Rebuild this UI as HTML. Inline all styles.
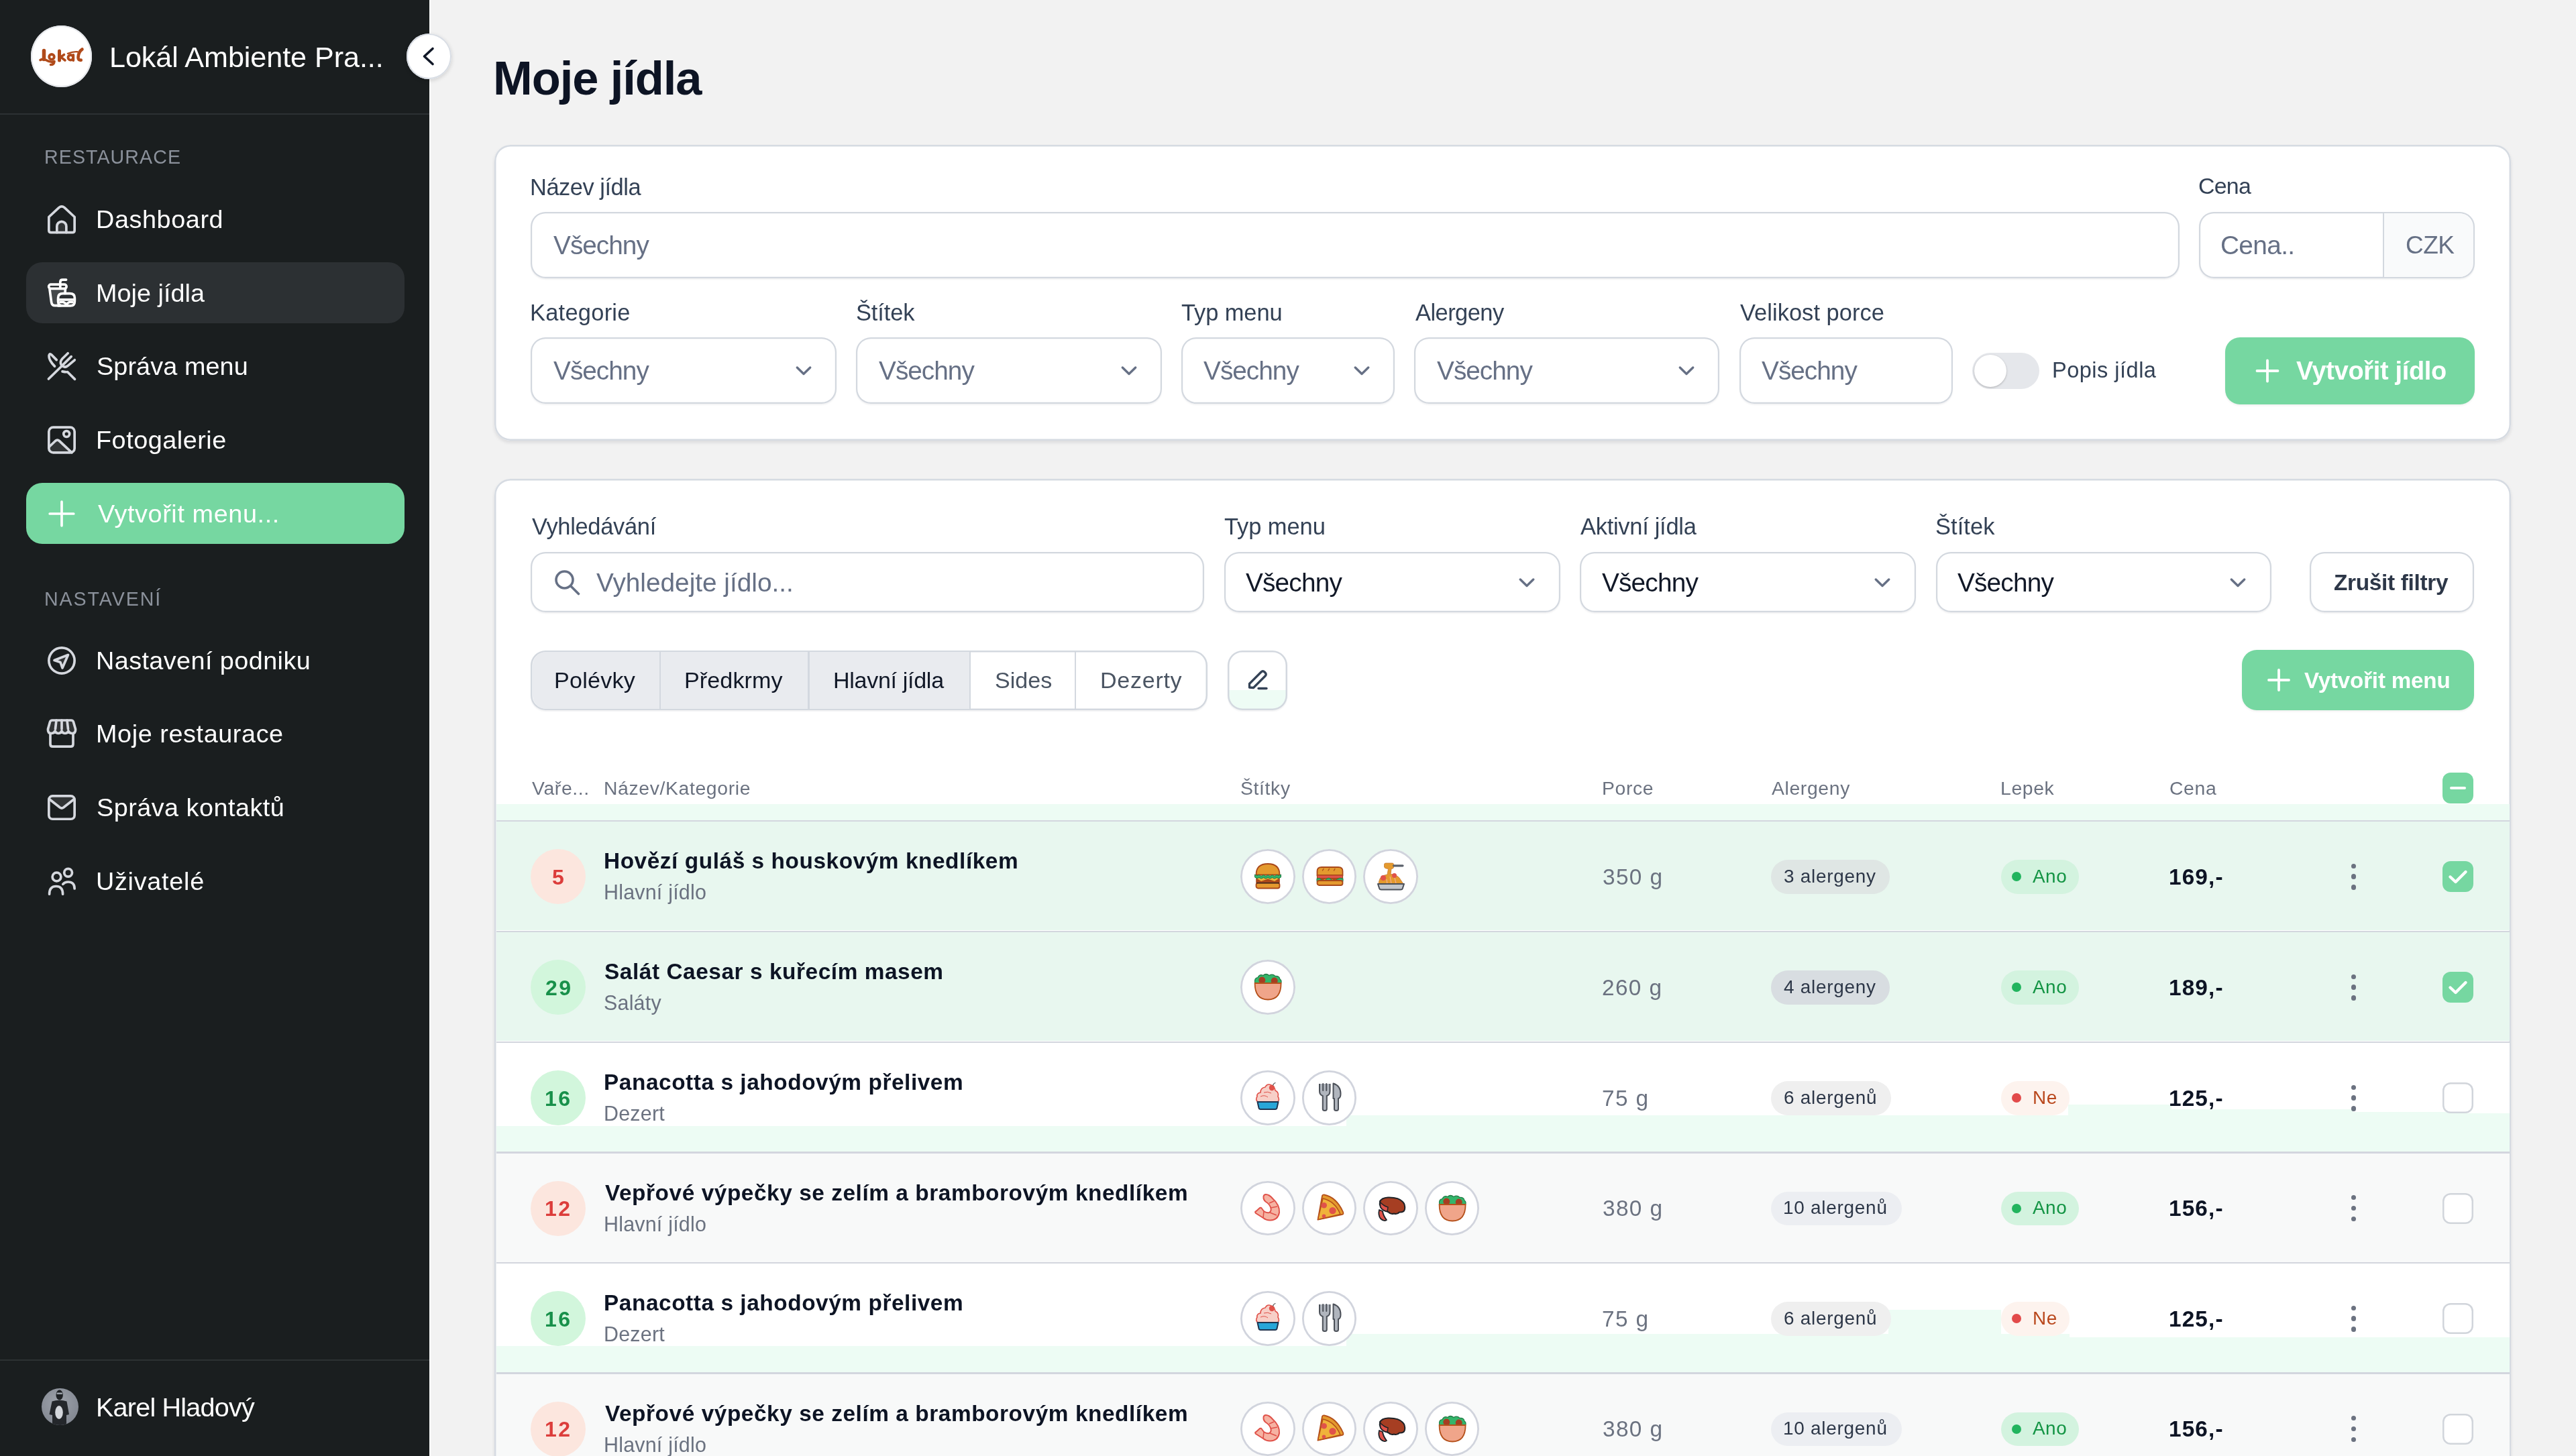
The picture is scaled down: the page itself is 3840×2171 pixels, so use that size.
<!DOCTYPE html><html><head><meta charset="utf-8"><style>
html,body{margin:0;padding:0;width:3840px;height:2171px;overflow:hidden;background:#f2f2f2;}
body{position:relative;font-family:"Liberation Sans",sans-serif;}
.t{position:absolute;white-space:nowrap;line-height:1;font-family:"Liberation Sans",sans-serif;will-change:transform;}
@media (max-width:2600px){html{zoom:0.5}}
@media (max-width:1400px){html{zoom:0.33333}}
</style></head><body>
<div style="position:absolute;left:0.00px;top:0.00px;width:3840.00px;height:2171.00px;background:#f2f2f2;"></div>
<div style="position:absolute;left:0.00px;top:0.00px;width:640.00px;height:2171.00px;background:#1a1e1f;"></div>
<div style="position:absolute;left:640.00px;top:0.00px;width:1.50px;height:2171.00px;background:#fbfbfb;"></div>
<div style="position:absolute;left:0.00px;top:169.00px;width:640.00px;height:2.00px;background:#2c3133;"></div>
<div style="position:absolute;left:0.00px;top:2027.00px;width:640.00px;height:2.00px;background:#2c3133;"></div>
<div style="position:absolute;left:46.00px;top:38.00px;width:91.00px;height:92.00px;background:#fff;border-radius:50%;box-shadow:0 0 0 2px #e5e7eb inset;"></div>
<svg style="position:absolute;left:59.00px;top:71.00px;overflow:visible;" width="66" height="28" viewBox="0 0 66 28"><g fill="none" stroke="#b04a1a" stroke-linecap="round" stroke-linejoin="round"><path d="M6.5,4.5 V17.5" stroke-width="5.5"/><path d="M1,18.5 Q5.5,16 10,18.8 Q16,22.5 22,20.5 Q21.5,25.5 16.5,25.5" stroke-width="3.6"/><circle cx="18" cy="13.8" r="3.8" stroke-width="3.8"/><path d="M29.5,5 V19" stroke-width="5"/><path d="M36.5,10.5 L31.5,14 L38,19" stroke-width="3.6"/><circle cx="46.3" cy="14.8" r="3.8" stroke-width="3.8"/><path d="M50.3,11 V19" stroke-width="3.8"/><path d="M42,8.8 Q50,5.5 56.5,6.2" stroke-width="2.4"/><path d="M63.5,2.5 Q58,6 57.5,14.5 Q57.3,19 61.8,18.6" stroke-width="4.6"/></g></svg>
<div class="t" style="left:163.00px;top:64.45px;font-size:43.17px;letter-spacing:-0.075px;color:#ffffff;">Lokál Ambiente Pra...</div>
<div style="position:absolute;left:605.75px;top:50.00px;width:67.50px;height:68.00px;background:#fff;border-radius:50%;box-shadow:0 0 0 2px #d8dde4 inset,0 2px 6px rgba(0,0,0,0.15);"></div>
<svg style="position:absolute;left:620.00px;top:64.00px;" width="40" height="40" viewBox="0 0 40 40"><path d="M25,8.5 L12.5,20 L25,31.5" fill="none" stroke="#111827" stroke-width="3.6" stroke-linecap="round" stroke-linejoin="round"/></svg>
<div class="t" style="left:65.50px;top:220.26px;font-size:28.63px;letter-spacing:1.056px;color:#8b919b;">RESTAURACE</div>
<div class="t" style="left:65.50px;top:878.76px;font-size:28.63px;letter-spacing:1.906px;color:#8b919b;">NASTAVENÍ</div>
<div style="position:absolute;left:39.00px;top:391.00px;width:564.00px;height:90.50px;background:#2c3033;border-radius:24px;"></div>
<div style="position:absolute;left:39.00px;top:720.00px;width:564.00px;height:90.75px;background:#76d7a1;border-radius:24px;"></div>
<div class="t" style="left:142.75px;top:308.50px;font-size:37.79px;letter-spacing:0.594px;color:#ffffff;">Dashboard</div>
<div class="t" style="left:142.75px;top:418.75px;font-size:37.79px;letter-spacing:0.028px;color:#ffffff;">Moje jídla</div>
<div class="t" style="left:143.75px;top:527.75px;font-size:37.79px;letter-spacing:0.100px;color:#ffffff;">Správa menu</div>
<div class="t" style="left:142.75px;top:637.50px;font-size:37.79px;letter-spacing:0.525px;color:#ffffff;">Fotogalerie</div>
<div class="t" style="left:145.75px;top:747.50px;font-size:37.79px;letter-spacing:0.617px;color:#ffffff;">Vytvořit menu...</div>
<div class="t" style="left:142.75px;top:966.75px;font-size:37.79px;letter-spacing:0.422px;color:#ffffff;">Nastavení podniku</div>
<div class="t" style="left:142.75px;top:1076.25px;font-size:37.79px;letter-spacing:0.589px;color:#ffffff;">Moje restaurace</div>
<div class="t" style="left:143.75px;top:1186.00px;font-size:37.79px;letter-spacing:0.482px;color:#ffffff;">Správa kontaktů</div>
<div class="t" style="left:142.75px;top:1295.50px;font-size:37.79px;letter-spacing:0.719px;color:#ffffff;">Uživatelé</div>
<div class="t" style="left:142.75px;top:2078.53px;font-size:39.53px;letter-spacing:-0.771px;color:#ffffff;">Karel Hladový</div>
<svg style="position:absolute;left:67.50px;top:302.50px;" width="48" height="48" viewBox="0 0 48 48"><path d="M17,43.6 V34.35 A7,7 0 0 1 31,34.35 V43.6 Z" fill="rgba(255,255,255,0.10)"/><path d="M4.85,20.5 L19.8,6.6 Q24,3 28.2,6.6 L43.15,20.5 V40.5 Q43.15,43.6 40,43.6 H8 Q4.85,43.6 4.85,40.5 Z" fill="none" stroke="#d5d8de" stroke-width="3.7" stroke-linecap="round" stroke-linejoin="round"/><path d="M16.85,43.6 V34.35 A7,7 0 0 1 30.85,34.35 V43.6" fill="none" stroke="#d5d8de" stroke-width="3.7" stroke-linecap="round" stroke-linejoin="round"/></svg>
<svg style="position:absolute;left:67.50px;top:412.00px;" width="48" height="48" viewBox="0 0 48 48"><path d="M6,19.3 L8.6,38.5 Q9.3,43.7 14,43.7 H20 L19,33 Q19,27 26,26 L29.3,19.3 Z" fill="rgba(255,255,255,0.12)"/><path d="M21.8,18 V8.5 Q21.8,5.05 25.2,5.05 H30.6" fill="none" stroke="#ffffff" stroke-width="3.7" stroke-linecap="round" stroke-linejoin="round"/><rect x="4.65" y="12.05" width="26.45" height="6.4" rx="3.2" fill="none" stroke="#ffffff" stroke-width="3.7" stroke-linecap="round" stroke-linejoin="round"/><path d="M6,19.3 L8.6,38.5 Q9.3,43.7 14,43.7 H22" fill="none" stroke="#ffffff" stroke-width="3.7" stroke-linecap="round" stroke-linejoin="round"/><path d="M29.4,19 L29,25.5" fill="none" stroke="#ffffff" stroke-width="3.7" stroke-linecap="round" stroke-linejoin="round"/><path d="M18.65,43.85 H37 Q43.35,43.85 43.35,37.5 V32 Q43.35,25.65 36,25.65 H26 Q18.65,25.65 18.65,32 V37.5 Q18.65,43.85 25,43.85" fill="none" stroke="#ffffff" stroke-width="3.7" stroke-linecap="round" stroke-linejoin="round"/><path d="M18.65,34.85 H43.35" fill="none" stroke="#ffffff" stroke-width="3.7" stroke-linecap="round" stroke-linejoin="round"/><path d="M22,38.5 H26.5 L31,41.3 L35.5,38.5 H40" fill="none" stroke="#ffffff" stroke-width="3.7" stroke-linecap="round" stroke-linejoin="round"/></svg>
<svg style="position:absolute;left:67.50px;top:522.00px;" width="48" height="48" viewBox="0 0 48 48"><path d="M16.3,14.6 L8.6,6.9 Q5.6,4 5,8.5 Q4.6,15 13.5,24.1" fill="none" stroke="#d5d8de" stroke-width="3.7" stroke-linecap="round" stroke-linejoin="round"/><path d="M25,31.9 Q29,33 32.8,32.7 L43.5,43.4" fill="none" stroke="#d5d8de" stroke-width="3.7" stroke-linecap="round" stroke-linejoin="round"/><path d="M4.4,43 L23.6,24.2" fill="none" stroke="#d5d8de" stroke-width="3.7" stroke-linecap="round" stroke-linejoin="round"/><path d="M33.2,4.7 L25,12.7 Q20.5,17.5 23.5,22.5 Q28.5,27.5 33.5,23.2 L43.3,14.8" fill="none" stroke="#d5d8de" stroke-width="3.7" stroke-linecap="round" stroke-linejoin="round"/><path d="M38.2,9.65 L25.4,22.4" fill="none" stroke="#d5d8de" stroke-width="3.7" stroke-linecap="round" stroke-linejoin="round"/></svg>
<svg style="position:absolute;left:67.50px;top:631.60px;" width="48" height="48" viewBox="0 0 48 48"><path d="M5,34.5 L14.5,25.5 Q17.5,22.8 20.5,25.5 L39,42.9 H9 Q5,42.9 5,39 Z" fill="rgba(255,255,255,0.10)"/><rect x="4.85" y="5.1" width="38.3" height="37.8" rx="6.5" fill="none" stroke="#d5d8de" stroke-width="3.7" stroke-linecap="round" stroke-linejoin="round"/><circle cx="31.2" cy="15" r="4.4" fill="none" stroke="#d5d8de" stroke-width="3.7" stroke-linecap="round" stroke-linejoin="round"/><path d="M5,34.5 L14.5,25.5 Q17.5,22.8 20.5,25.5 L39,42.9" fill="none" stroke="#d5d8de" stroke-width="3.7" stroke-linecap="round" stroke-linejoin="round"/></svg>
<svg style="position:absolute;left:67.50px;top:741.50px;" width="48" height="48" viewBox="0 0 48 48"><path d="M24,6.2 V41.8 M6.2,24 H41.8" fill="none" stroke="#ffffff" stroke-width="3.7" stroke-linecap="round" stroke-linejoin="round"/></svg>
<svg style="position:absolute;left:67.50px;top:960.60px;" width="48" height="48" viewBox="0 0 48 48"><path d="M33.5,15.5 L13,23.5 L22,26.5 L25,35 Z" fill="rgba(255,255,255,0.10)"/><circle cx="24" cy="24" r="19.15" fill="none" stroke="#d5d8de" stroke-width="3.7" stroke-linecap="round" stroke-linejoin="round"/><path d="M33.5,15.5 L13,23.5 L22,26.5 L25,35 Z" fill="none" stroke="#d5d8de" stroke-width="3.7" stroke-linecap="round" stroke-linejoin="round"/></svg>
<svg style="position:absolute;left:67.50px;top:1070.00px;" width="48" height="48" viewBox="0 0 48 48"><path d="M3.5,17 L6.5,6.5 Q7.2,4 10,4 H38 Q40.8,4 41.5,6.5 L44.5,17 V18.5 Q44.5,23.5 39.5,23.5 Q35.5,23.5 34,20 Q32.3,23.5 29,23.5 Q25.6,23.5 24,20 Q22.4,23.5 19,23.5 Q15.7,23.5 14,20 Q12.5,23.5 8.5,23.5 Q3.5,23.5 3.5,18.5 Z" fill="rgba(255,255,255,0.10)"/><path d="M3.5,17 L6.5,6.5 Q7.2,4 10,4 H38 Q40.8,4 41.5,6.5 L44.5,17 V18.5 Q44.5,23.5 39.5,23.5 Q35.5,23.5 34,20 Q32.3,23.5 29,23.5 Q25.6,23.5 24,20 Q22.4,23.5 19,23.5 Q15.7,23.5 14,20 Q12.5,23.5 8.5,23.5 Q3.5,23.5 3.5,18.5 Z" fill="none" stroke="#d5d8de" stroke-width="3.7" stroke-linecap="round" stroke-linejoin="round"/><path d="M16,4 L14.5,17 M24,4 V17 M32,4 L33.5,17" fill="none" stroke="#d5d8de" stroke-width="3.7" stroke-linecap="round" stroke-linejoin="round"/><path d="M7,24 V39.5 Q7,43.15 10.5,43.15 H37.5 Q41,43.15 41,39.5 V24" fill="none" stroke="#d5d8de" stroke-width="3.7" stroke-linecap="round" stroke-linejoin="round"/></svg>
<svg style="position:absolute;left:67.50px;top:1180.00px;" width="48" height="48" viewBox="0 0 48 48"><path d="M6,9 L24,24 L42,9 Z" fill="rgba(255,255,255,0.10)"/><rect x="4.85" y="6.85" width="38.3" height="34.4" rx="5.5" fill="none" stroke="#d5d8de" stroke-width="3.7" stroke-linecap="round" stroke-linejoin="round"/><path d="M5.5,11.5 L21.3,24 Q24,26 26.7,24 L42.5,11.5" fill="none" stroke="#d5d8de" stroke-width="3.7" stroke-linecap="round" stroke-linejoin="round"/></svg>
<svg style="position:absolute;left:67.50px;top:1290.00px;" width="48" height="48" viewBox="0 0 48 48"><circle cx="16.5" cy="17.5" r="6.4" fill="none" stroke="#d5d8de" stroke-width="3.7" stroke-linecap="round" stroke-linejoin="round"/><circle cx="33.6" cy="11.3" r="5.9" fill="none" stroke="#d5d8de" stroke-width="3.7" stroke-linecap="round" stroke-linejoin="round"/><path d="M5.6,43.15 Q5.6,31.5 15.6,31.5 Q25.6,31.5 25.6,43.15" fill="none" stroke="#d5d8de" stroke-width="3.7" stroke-linecap="round" stroke-linejoin="round"/><path d="M25.8,28.3 Q28.5,25 33.5,25 Q43.15,25 43.15,35" fill="none" stroke="#d5d8de" stroke-width="3.7" stroke-linecap="round" stroke-linejoin="round"/></svg>
<div style="position:absolute;left:62.00px;top:2070.00px;width:55.00px;height:55.00px;background:radial-gradient(circle at 45% 40%,#9ea3ab,#7a7f89);border-radius:50%;"></div>
<svg style="position:absolute;left:62.00px;top:2070.00px;" width="55" height="55" viewBox="0 0 55 55"><defs><clipPath id="avc"><circle cx="27.5" cy="27.5" r="27.5"/></clipPath></defs><g clip-path="url(#avc)"><path d="M15.6,19.5 Q26.5,16 37.5,19.5 L41,39 L37,40 V56 H16 V40 L11.5,39 Z" fill="#24272b"/><ellipse cx="26.7" cy="10" rx="5.2" ry="7.6" fill="#1e2124"/><rect x="22.5" y="6.5" width="8.5" height="2.6" rx="1.2" fill="#9aa0a8"/><ellipse cx="26" cy="36" rx="5.8" ry="10" fill="#d4d7dc"/></g></svg>
<div class="t" style="left:735.00px;top:82.32px;font-size:70.48px;letter-spacing:-1.056px;font-weight:700;color:#0d1424;">Moje jídla</div>
<div style="position:absolute;left:737.00px;top:215.50px;width:3006.00px;height:441.00px;background:#fff;border-radius:24px;box-shadow:0 0 0 2.5px #d6dbe2 inset,0 3px 5px rgba(15,23,42,0.10);"></div>
<div class="t" style="left:789.50px;top:261.58px;font-size:34.45px;letter-spacing:-0.475px;color:#334155;">Název jídla</div>
<div style="position:absolute;left:791.00px;top:315.75px;width:2458.00px;height:99.25px;background:#fff;border-radius:22px;box-shadow:0 0 0 2.2px #d3d8df inset,0 2px 2px rgba(15,23,42,0.05);"></div>
<div class="t" style="left:824.50px;top:346.64px;font-size:38.81px;letter-spacing:-1.000px;color:#667085;">Všechny</div>
<div class="t" style="left:3277.25px;top:261.28px;font-size:33.92px;letter-spacing:-0.750px;color:#334155;">Cena</div>
<div style="position:absolute;left:3278.00px;top:315.75px;width:410.50px;height:99.25px;background:#fff;border-radius:22px;box-shadow:0 0 0 2.2px #d3d8df inset,0 2px 2px rgba(15,23,42,0.05);"></div>
<div style="position:absolute;left:3553.00px;top:318.00px;width:133.00px;height:94.50px;background:#f9fafb;border-radius:0 20px 20px 0;"></div>
<div style="position:absolute;left:3551.50px;top:318.00px;width:2.50px;height:94.50px;background:#d3d8df;"></div>
<div class="t" style="left:3309.50px;top:346.64px;font-size:38.81px;letter-spacing:-0.650px;color:#667085;">Cena..</div>
<div class="t" style="left:3586.00px;top:347.43px;font-size:36.99px;letter-spacing:-0.500px;color:#667085;">CZK</div>
<div class="t" style="left:789.50px;top:448.83px;font-size:34.45px;letter-spacing:0.250px;color:#334155;">Kategorie</div>
<div style="position:absolute;left:791.00px;top:503.25px;width:456.00px;height:98.75px;background:#fff;border-radius:22px;box-shadow:0 0 0 2.2px #d3d8df inset,0 2px 2px rgba(15,23,42,0.05);"></div>
<div class="t" style="left:824.50px;top:534.14px;font-size:38.81px;letter-spacing:-1.000px;color:#667085;">Všechny</div>
<svg style="position:absolute;left:1184.00px;top:543.00px;" width="28" height="20" viewBox="0 0 28 20"><path d="M4.3,5 L14,14.5 L23.7,5" fill="none" stroke="#667085" stroke-width="3.4" stroke-linecap="round" stroke-linejoin="round"/></svg>
<div class="t" style="left:1275.50px;top:448.83px;font-size:34.45px;letter-spacing:-0.120px;color:#334155;">Štítek</div>
<div style="position:absolute;left:1276.00px;top:503.25px;width:455.80px;height:98.75px;background:#fff;border-radius:22px;box-shadow:0 0 0 2.2px #d3d8df inset,0 2px 2px rgba(15,23,42,0.05);"></div>
<div class="t" style="left:1309.50px;top:534.14px;font-size:38.81px;letter-spacing:-1.000px;color:#667085;">Všechny</div>
<svg style="position:absolute;left:1668.80px;top:543.00px;" width="28" height="20" viewBox="0 0 28 20"><path d="M4.3,5 L14,14.5 L23.7,5" fill="none" stroke="#667085" stroke-width="3.4" stroke-linecap="round" stroke-linejoin="round"/></svg>
<div class="t" style="left:1761.20px;top:448.83px;font-size:34.45px;letter-spacing:-0.086px;color:#334155;">Typ menu</div>
<div style="position:absolute;left:1760.70px;top:503.25px;width:318.00px;height:98.75px;background:#fff;border-radius:22px;box-shadow:0 0 0 2.2px #d3d8df inset,0 2px 2px rgba(15,23,42,0.05);"></div>
<div class="t" style="left:1794.20px;top:534.14px;font-size:38.81px;letter-spacing:-1.000px;color:#667085;">Všechny</div>
<svg style="position:absolute;left:2015.70px;top:543.00px;" width="28" height="20" viewBox="0 0 28 20"><path d="M4.3,5 L14,14.5 L23.7,5" fill="none" stroke="#667085" stroke-width="3.4" stroke-linecap="round" stroke-linejoin="round"/></svg>
<div class="t" style="left:2109.50px;top:448.83px;font-size:34.45px;letter-spacing:-0.529px;color:#334155;">Alergeny</div>
<div style="position:absolute;left:2108.00px;top:503.25px;width:455.00px;height:98.75px;background:#fff;border-radius:22px;box-shadow:0 0 0 2.2px #d3d8df inset,0 2px 2px rgba(15,23,42,0.05);"></div>
<div class="t" style="left:2141.50px;top:534.14px;font-size:38.81px;letter-spacing:-1.000px;color:#667085;">Všechny</div>
<svg style="position:absolute;left:2500.00px;top:543.00px;" width="28" height="20" viewBox="0 0 28 20"><path d="M4.3,5 L14,14.5 L23.7,5" fill="none" stroke="#667085" stroke-width="3.4" stroke-linecap="round" stroke-linejoin="round"/></svg>
<div class="t" style="left:2594.00px;top:448.83px;font-size:34.45px;letter-spacing:0.038px;color:#334155;">Velikost porce</div>
<div style="position:absolute;left:2592.50px;top:503.25px;width:318.75px;height:98.75px;background:#fff;border-radius:22px;box-shadow:0 0 0 2.2px #d3d8df inset,0 2px 2px rgba(15,23,42,0.05);"></div>
<div class="t" style="left:2626.00px;top:534.14px;font-size:38.81px;letter-spacing:-1.000px;color:#667085;">Všechny</div>
<div style="position:absolute;left:2939.50px;top:525.75px;width:100.00px;height:54.25px;background:#e5e7eb;border-radius:27px;"></div>
<div style="position:absolute;left:2942.50px;top:529.00px;width:48.00px;height:48.00px;background:#fff;border-radius:50%;box-shadow:0 1px 3px rgba(0,0,0,0.25),0 0 0 1px #e5e7eb;"></div>
<div class="t" style="left:3059.00px;top:536.18px;font-size:32.56px;letter-spacing:0.480px;color:#334155;">Popis jídla</div>
<div style="position:absolute;left:3316.75px;top:503.00px;width:372.25px;height:99.50px;background:#76d7a1;border-radius:22px;box-shadow:0 2px 3px rgba(0,0,0,0.06);"></div>
<svg style="position:absolute;left:3362.00px;top:535.00px;" width="36" height="36" viewBox="0 0 36 36"><path d="M18,2.5 V33.5 M2.5,18 H33.5" fill="none" stroke="#fff" stroke-width="3.8" stroke-linecap="round"/></svg>
<div class="t" style="left:3423.10px;top:534.79px;font-size:37.86px;letter-spacing:-0.292px;font-weight:700;color:#ffffff;">Vytvořit jídlo</div>
<div style="position:absolute;left:737.00px;top:714.00px;width:3006.00px;height:1546.00px;background:#fff;border-radius:24px;box-shadow:0 0 0 2.5px #d6dbe2 inset,0 3px 5px rgba(15,23,42,0.10);"></div>
<div class="t" style="left:792.50px;top:768.33px;font-size:34.45px;letter-spacing:-0.300px;color:#334155;">Vyhledávání</div>
<div style="position:absolute;left:791.00px;top:823.25px;width:1003.70px;height:89.75px;background:#fff;border-radius:22px;box-shadow:0 0 0 2.2px #d3d8df inset,0 2px 2px rgba(15,23,42,0.05);"></div>
<svg style="position:absolute;left:824.00px;top:847.00px;" width="42" height="42" viewBox="0 0 42 42"><circle cx="17.5" cy="17.5" r="12.5" fill="none" stroke="#667085" stroke-width="3.6"/><path d="M26.7,26.7 L38.5,38.5" stroke="#667085" stroke-width="3.6" stroke-linecap="round"/></svg>
<div class="t" style="left:888.75px;top:849.64px;font-size:38.81px;letter-spacing:-0.014px;color:#667085;">Vyhledejte jídlo...</div>
<div class="t" style="left:1824.70px;top:768.33px;font-size:34.45px;letter-spacing:-0.057px;color:#334155;">Typ menu</div>
<div style="position:absolute;left:1824.70px;top:823.25px;width:501.70px;height:89.75px;background:#fff;border-radius:22px;box-shadow:0 0 0 2.2px #d3d8df inset,0 2px 2px rgba(15,23,42,0.05);"></div>
<div class="t" style="left:1857.20px;top:850.14px;font-size:38.81px;letter-spacing:-0.833px;color:#111827;">Všechny</div>
<svg style="position:absolute;left:2262.40px;top:858.50px;" width="28" height="20" viewBox="0 0 28 20"><path d="M4.3,5 L14,14.5 L23.7,5" fill="none" stroke="#667085" stroke-width="3.4" stroke-linecap="round" stroke-linejoin="round"/></svg>
<div class="t" style="left:2356.30px;top:768.33px;font-size:34.45px;letter-spacing:-0.275px;color:#334155;">Aktivní jídla</div>
<div style="position:absolute;left:2355.30px;top:823.25px;width:500.70px;height:89.75px;background:#fff;border-radius:22px;box-shadow:0 0 0 2.2px #d3d8df inset,0 2px 2px rgba(15,23,42,0.05);"></div>
<div class="t" style="left:2387.80px;top:850.14px;font-size:38.81px;letter-spacing:-0.833px;color:#111827;">Všechny</div>
<svg style="position:absolute;left:2792.00px;top:858.50px;" width="28" height="20" viewBox="0 0 28 20"><path d="M4.3,5 L14,14.5 L23.7,5" fill="none" stroke="#667085" stroke-width="3.4" stroke-linecap="round" stroke-linejoin="round"/></svg>
<div class="t" style="left:2884.50px;top:768.33px;font-size:34.45px;letter-spacing:0.060px;color:#334155;">Štítek</div>
<div style="position:absolute;left:2885.50px;top:823.25px;width:500.70px;height:89.75px;background:#fff;border-radius:22px;box-shadow:0 0 0 2.2px #d3d8df inset,0 2px 2px rgba(15,23,42,0.05);"></div>
<div class="t" style="left:2918.00px;top:850.14px;font-size:38.81px;letter-spacing:-0.833px;color:#111827;">Všechny</div>
<svg style="position:absolute;left:3322.20px;top:858.50px;" width="28" height="20" viewBox="0 0 28 20"><path d="M4.3,5 L14,14.5 L23.7,5" fill="none" stroke="#667085" stroke-width="3.4" stroke-linecap="round" stroke-linejoin="round"/></svg>
<div style="position:absolute;left:3443.20px;top:823.10px;width:245.00px;height:89.70px;background:#fff;border-radius:22px;box-shadow:0 0 0 2.2px #d3d8df inset,0 2px 2px rgba(15,23,42,0.05);"></div>
<div class="t" style="left:3479.30px;top:851.69px;font-size:33.43px;letter-spacing:-0.333px;font-weight:700;color:#2d3748;">Zrušit filtry</div>
<div style="position:absolute;left:791.00px;top:969.50px;width:1009.00px;height:89.75px;background:#fff;border-radius:22px;box-shadow:0 0 0 2.5px #d3d8df inset,0 2px 2px rgba(15,23,42,0.05);overflow:hidden;"></div>
<div style="position:absolute;left:793.50px;top:972.00px;width:652.25px;height:84.75px;background:#e9ebef;border-radius:20px 0 0 20px;"></div>
<div style="position:absolute;left:982.50px;top:972.00px;width:2.50px;height:84.75px;background:#d3d8df;"></div>
<div style="position:absolute;left:1204.25px;top:972.00px;width:2.50px;height:84.75px;background:#d3d8df;"></div>
<div style="position:absolute;left:1444.50px;top:972.00px;width:2.50px;height:84.75px;background:#d3d8df;"></div>
<div style="position:absolute;left:1601.75px;top:972.00px;width:2.50px;height:84.75px;background:#d3d8df;"></div>
<div class="t" style="left:825.75px;top:997.39px;font-size:34.08px;letter-spacing:0.250px;color:#111827;">Polévky</div>
<div class="t" style="left:1020.00px;top:997.39px;font-size:34.08px;letter-spacing:0.107px;color:#111827;">Předkrmy</div>
<div class="t" style="left:1242.00px;top:997.39px;font-size:34.08px;letter-spacing:-0.318px;color:#111827;">Hlavní jídla</div>
<div class="t" style="left:1483.00px;top:997.39px;font-size:34.08px;color:#4b5563;">Sides</div>
<div class="t" style="left:1639.50px;top:997.39px;font-size:34.08px;letter-spacing:0.708px;color:#4b5563;">Dezerty</div>
<div style="position:absolute;left:1829.50px;top:969.50px;width:89.75px;height:89.75px;background:linear-gradient(#fff 0,#fff 59px,#eefcf5 59px);border-radius:22px;box-shadow:0 0 0 2.5px #d3d8df inset,0 2px 2px rgba(15,23,42,0.05);"></div>
<svg style="position:absolute;left:1856.00px;top:996.00px;" width="36" height="36" viewBox="0 0 36 36"><path d="M6.5,29 L6.5,23.5 L24,6 Q26.5,3.5 29,6 L30,7 Q32.5,9.5 30,12 L12.5,29.5 Z" fill="none" stroke="#334155" stroke-width="3.3" stroke-linejoin="round"/><path d="M20,30.5 H32" stroke="#334155" stroke-width="3.3" stroke-linecap="round"/></svg>
<div style="position:absolute;left:3341.80px;top:969.30px;width:346.40px;height:90.00px;background:#76d7a1;border-radius:22px;box-shadow:0 2px 3px rgba(0,0,0,0.06);"></div>
<svg style="position:absolute;left:3378.50px;top:996.00px;" width="36" height="36" viewBox="0 0 36 36"><path d="M18,3 V33 M3,18 H33" fill="none" stroke="#fff" stroke-width="3.8" stroke-linecap="round"/></svg>
<div class="t" style="left:3434.60px;top:998.34px;font-size:33.14px;letter-spacing:-0.167px;font-weight:700;color:#ffffff;">Vytvořit menu</div>
<div style="position:absolute;left:739.50px;top:1198.75px;width:3001.00px;height:23.75px;background:#edfcf4;"></div>
<div class="t" style="left:792.50px;top:1160.50px;font-size:28.34px;letter-spacing:0.643px;color:#6b7280;">Vaře...</div>
<div class="t" style="left:900.00px;top:1160.50px;font-size:28.34px;letter-spacing:0.643px;color:#6b7280;">Název/Kategorie</div>
<div class="t" style="left:1849.00px;top:1160.50px;font-size:28.34px;letter-spacing:0.643px;color:#6b7280;">Štítky</div>
<div class="t" style="left:2388.00px;top:1160.50px;font-size:28.34px;letter-spacing:0.643px;color:#6b7280;">Porce</div>
<div class="t" style="left:2641.25px;top:1160.50px;font-size:28.34px;letter-spacing:0.643px;color:#6b7280;">Alergeny</div>
<div class="t" style="left:2981.75px;top:1160.50px;font-size:28.34px;letter-spacing:0.643px;color:#6b7280;">Lepek</div>
<div class="t" style="left:3234.00px;top:1160.50px;font-size:28.34px;letter-spacing:0.643px;color:#6b7280;">Cena</div>
<div style="position:absolute;left:3641.00px;top:1151.75px;width:46.00px;height:45.75px;background:#76d7a1;border-radius:12px;"></div>
<div style="position:absolute;left:3652.00px;top:1172.50px;width:23.50px;height:4.50px;background:#fff;border-radius:2px;"></div>
<div style="position:absolute;left:739.50px;top:1225.00px;width:3001.00px;height:162.00px;background:#e8f7ef;"></div>
<div style="position:absolute;left:739.50px;top:1222.50px;width:3001.00px;height:2.50px;background:#d3d6de;"></div>
<div style="position:absolute;left:790.75px;top:1266.00px;width:82.25px;height:82.00px;background:#fce6de;border-radius:50%;"></div>
<div class="t" style="left:822.90px;top:1291.91px;font-size:32.00px;font-weight:700;color:#dc3d3b;">5</div>
<div class="t" style="left:900.00px;top:1267.25px;font-size:33.36px;letter-spacing:0.570px;font-weight:700;color:#0d1424;">Hovězí guláš s houskovým knedlíkem</div>
<div class="t" style="left:900.00px;top:1315.47px;font-size:30.45px;letter-spacing:0.205px;color:#6b7280;">Hlavní jídlo</div>
<div style="position:absolute;left:1849.25px;top:1266.25px;width:81.50px;height:81.50px;background:#fff;border-radius:50%;box-shadow:0 0 0 2.8px #d1d4dd inset;"></div>
<svg style="position:absolute;left:1870.00px;top:1287.00px;overflow:visible;" width="40" height="40" viewBox="0 0 40 40"><path d="M2.5,17.5 Q2.5,1 20,1 Q37.5,1 37.5,17.5 Z" fill="#e49a2e" stroke="#a9481a" stroke-width="1.8"/><rect x="2.2" y="21.5" width="35.6" height="8" fill="#a9481a"/><path d="M2.2,22 L10,27 L20,23.5 L30,27 L37.8,22 Z" fill="#f0b23a"/><path d="M0.5,17 Q4,20 7,17.5 Q10,21 13.5,17.5 Q17,21 20,17.5 Q23,21 26.5,17.5 Q30,21 33,17.5 Q36,20 39.5,17 L39.5,21 Q36,24 33,21.5 Q30,24.5 26.5,21.5 Q23,24.5 20,21.5 Q17,24.5 13.5,21.5 Q10,24.5 7,21.5 Q4,24 0.5,21 Z" fill="#33b56a" stroke="#1f7a44" stroke-width="1"/><rect x="2.5" y="29.5" width="35" height="8" rx="3" fill="#e49a2e" stroke="#a9481a" stroke-width="1.8"/><path d="M3,29.6 H37" stroke="#222" stroke-width="1.4"/></svg>
<div style="position:absolute;left:1940.75px;top:1266.25px;width:81.50px;height:81.50px;background:#fff;border-radius:50%;box-shadow:0 0 0 2.8px #d1d4dd inset;"></div>
<svg style="position:absolute;left:1961.50px;top:1287.00px;overflow:visible;" width="40" height="40" viewBox="0 0 40 40"><path d="M1.5,18 V12 Q1.5,6 8,6 H33 Q39.5,6 39.5,12 V18 Z" fill="#e49a2e" stroke="#a9481a" stroke-width="1.8"/><path d="M11,8.5 L9.5,11 M19.5,8.5 L18,11 M28,8.5 L26.5,11" stroke="#a9481a" stroke-width="1.3" stroke-linecap="round"/><rect x="1.5" y="21" width="38" height="6" fill="#a9481a"/><path d="M1.5,22 L9,25.5 L18,22.5 L27,25.5 L39.5,22 V27 H1.5 Z" fill="#f0b23a"/><rect x="1.5" y="18" width="38" height="4.5" fill="#e0524a" stroke="#a9481a" stroke-width="1.2"/><path d="M1,23 Q5,21 8,25 Q11,28 15,24 Q19,20 23,25 Q27,28 31,24 Q35,21 40,23 V27.5 H1 Z" fill="#33b56a" stroke="#1f7a44" stroke-width="1"/><rect x="1.5" y="26" width="38" height="7" rx="3" fill="#e49a2e" stroke="#a9481a" stroke-width="1.8"/></svg>
<div style="position:absolute;left:2032.25px;top:1266.25px;width:81.50px;height:81.50px;background:#fff;border-radius:50%;box-shadow:0 0 0 2.8px #d1d4dd inset;"></div>
<svg style="position:absolute;left:2053.00px;top:1287.00px;overflow:visible;" width="40" height="40" viewBox="0 0 40 40"><path d="M2,31 Q3,21 9,18.5 L15,17 L16.5,8.5 Q11,8 10.5,6 V2 Q10.5,0 12.5,0 H22.5 Q24.5,0 24.5,2 V6 Q24.5,8.3 21,8.6 L20,16.5 Q28,16.5 33,22 L39,31 Z" fill="#e49a2e" stroke="#c87a2e" stroke-width="0.8"/><path d="M24.5,3.8 H38" stroke="#5b616b" stroke-width="3.2" stroke-linecap="round"/><path d="M14,24 L15,31 M19,20 L21,30 M26,22 L28,30" stroke="#f6b2a2" stroke-width="1"/><circle cx="9" cy="22" r="4" fill="#e0524a"/><circle cx="25.5" cy="18.5" r="3.5" fill="#e0524a"/><path d="M1,31 H40 L37.8,37.8 Q37.2,39.5 35,39.5 H6 Q3.8,39.5 3.2,37.8 Z" fill="#c3c7cd" stroke="#4b5058" stroke-width="2" stroke-linejoin="round"/></svg>
<div class="t" style="left:2389.00px;top:1290.50px;font-size:33.36px;letter-spacing:1.375px;color:#6b7280;">350 g</div>
<div style="position:absolute;left:2640.00px;top:1282.00px;width:177.09px;height:50.50px;background:#dfe6e4;border-radius:25px;"></div>
<div class="t" style="left:2659.00px;top:1292.62px;font-size:27.91px;letter-spacing:0.750px;color:#2d3748;">3 alergeny</div>
<div style="position:absolute;left:2983.00px;top:1282.00px;width:115.75px;height:50.50px;background:#d3f3df;border-radius:25px;"></div>
<div style="position:absolute;left:2999.00px;top:1300.00px;width:14.00px;height:14.00px;background:#22b45e;border-radius:50%;"></div>
<div class="t" style="left:3030.00px;top:1292.62px;font-size:27.91px;letter-spacing:0.500px;color:#139444;">Ano</div>
<div class="t" style="left:3233.00px;top:1290.50px;font-size:33.36px;letter-spacing:1.125px;font-weight:700;color:#0d1424;">169,-</div>
<div style="position:absolute;left:3504.75px;top:1287.65px;width:7.00px;height:7.20px;background:#6b7280;border-radius:50%;"></div>
<div style="position:absolute;left:3504.75px;top:1303.40px;width:7.00px;height:7.20px;background:#6b7280;border-radius:50%;"></div>
<div style="position:absolute;left:3504.75px;top:1319.40px;width:7.00px;height:7.20px;background:#6b7280;border-radius:50%;"></div>
<div style="position:absolute;left:3641.00px;top:1284.25px;width:46.00px;height:45.75px;background:#76d7a1;border-radius:12px;"></div>
<svg style="position:absolute;left:3641.00px;top:1284.25px;" width="46" height="46" viewBox="0 0 46 46"><path d="M11.5,23.5 L19.5,31 L34.5,16" fill="none" stroke="#fff" stroke-width="4.4" stroke-linecap="round" stroke-linejoin="round"/></svg>
<div style="position:absolute;left:739.50px;top:1390.00px;width:3001.00px;height:162.00px;background:#e8f7ef;"></div>
<div style="position:absolute;left:739.50px;top:1387.50px;width:3001.00px;height:2.50px;background:#d3d6de;"></div>
<div style="position:absolute;left:790.75px;top:1431.00px;width:82.25px;height:82.00px;background:#d2f6dc;border-radius:50%;"></div>
<div class="t" style="left:812.90px;top:1456.91px;font-size:32.00px;letter-spacing:2.500px;font-weight:700;color:#18904a;">29</div>
<div class="t" style="left:901.00px;top:1432.25px;font-size:33.36px;letter-spacing:0.570px;font-weight:700;color:#0d1424;">Salát Caesar s kuřecím masem</div>
<div class="t" style="left:900.00px;top:1480.47px;font-size:30.45px;letter-spacing:0.205px;color:#6b7280;">Saláty</div>
<div style="position:absolute;left:1849.25px;top:1431.25px;width:81.50px;height:81.50px;background:#fff;border-radius:50%;box-shadow:0 0 0 2.8px #d1d4dd inset;"></div>
<svg style="position:absolute;left:1870.00px;top:1452.00px;overflow:visible;" width="40" height="40" viewBox="0 0 40 40"><path d="M0.6,14 Q-0.5,6 5,5.5 Q8,0 13,2.5 Q17,-1.5 22,2.5 Q27,-0.5 31,3.5 Q37,3 38,8 Q41,10 39.6,14 Z" fill="#33b56a" stroke="#1f7a44" stroke-width="1.2"/><circle cx="11.3" cy="9.5" r="5" fill="#a63e22"/><circle cx="29.7" cy="10.5" r="5" fill="#a63e22"/><path d="M17,9 Q20,5 24,9 Q22,13 18,12 Z" fill="#33b56a"/><path d="M0.6,14 H39.6 Q39.6,38.5 20.1,38.5 Q0.6,38.5 0.6,14 Z" fill="#f0a58a" stroke="#b5501a" stroke-width="1.8"/></svg>
<div class="t" style="left:2388.00px;top:1455.50px;font-size:33.36px;letter-spacing:1.375px;color:#6b7280;">260 g</div>
<div style="position:absolute;left:2640.00px;top:1447.00px;width:177.09px;height:50.50px;background:#d8dde1;border-radius:25px;"></div>
<div class="t" style="left:2659.00px;top:1457.62px;font-size:27.91px;letter-spacing:0.750px;color:#2d3748;">4 alergeny</div>
<div style="position:absolute;left:2983.00px;top:1447.00px;width:115.75px;height:50.50px;background:#d3f3df;border-radius:25px;"></div>
<div style="position:absolute;left:2999.00px;top:1465.00px;width:14.00px;height:14.00px;background:#22b45e;border-radius:50%;"></div>
<div class="t" style="left:3030.00px;top:1457.62px;font-size:27.91px;letter-spacing:0.500px;color:#139444;">Ano</div>
<div class="t" style="left:3233.00px;top:1455.50px;font-size:33.36px;letter-spacing:1.125px;font-weight:700;color:#0d1424;">189,-</div>
<div style="position:absolute;left:3504.75px;top:1452.65px;width:7.00px;height:7.20px;background:#6b7280;border-radius:50%;"></div>
<div style="position:absolute;left:3504.75px;top:1468.40px;width:7.00px;height:7.20px;background:#6b7280;border-radius:50%;"></div>
<div style="position:absolute;left:3504.75px;top:1484.40px;width:7.00px;height:7.20px;background:#6b7280;border-radius:50%;"></div>
<div style="position:absolute;left:3641.00px;top:1449.25px;width:46.00px;height:45.75px;background:#76d7a1;border-radius:12px;"></div>
<svg style="position:absolute;left:3641.00px;top:1449.25px;" width="46" height="46" viewBox="0 0 46 46"><path d="M11.5,23.5 L19.5,31 L34.5,16" fill="none" stroke="#fff" stroke-width="4.4" stroke-linecap="round" stroke-linejoin="round"/></svg>
<div style="position:absolute;left:739.50px;top:1555.00px;width:3001.00px;height:162.00px;background:#edfcf4;"></div>
<div style="position:absolute;left:739.50px;top:1555.00px;width:1267.50px;height:123.75px;background:#fff;"></div>
<div style="position:absolute;left:2007.00px;top:1555.00px;width:1076.00px;height:108.00px;background:#fff;"></div>
<div style="position:absolute;left:3083.00px;top:1555.00px;width:154.00px;height:92.00px;background:#fff;"></div>
<div style="position:absolute;left:3237.00px;top:1555.00px;width:271.00px;height:99.00px;background:#fff;"></div>
<div style="position:absolute;left:3508.00px;top:1555.00px;width:152.00px;height:103.00px;background:#fff;"></div>
<div style="position:absolute;left:3660.00px;top:1555.00px;width:80.50px;height:105.00px;background:#fff;"></div>
<div style="position:absolute;left:739.50px;top:1552.50px;width:3001.00px;height:2.50px;background:#d3d6de;"></div>
<div style="position:absolute;left:790.75px;top:1596.00px;width:82.25px;height:82.00px;background:#d2f6dc;border-radius:50%;"></div>
<div class="t" style="left:812.40px;top:1621.91px;font-size:32.00px;letter-spacing:2.500px;font-weight:700;color:#18904a;">16</div>
<div class="t" style="left:900.00px;top:1597.25px;font-size:33.36px;letter-spacing:0.570px;font-weight:700;color:#0d1424;">Panacotta s jahodovým přelivem</div>
<div class="t" style="left:900.00px;top:1645.47px;font-size:30.45px;letter-spacing:0.205px;color:#6b7280;">Dezert</div>
<div style="position:absolute;left:1849.25px;top:1596.25px;width:81.50px;height:81.50px;background:#fff;border-radius:50%;box-shadow:0 0 0 2.8px #d1d4dd inset;"></div>
<svg style="position:absolute;left:1870.00px;top:1617.00px;overflow:visible;" width="40" height="40" viewBox="0 0 40 40"><path d="M5,26 Q1,23 4,18 Q3,13 9,12 Q9,5 16,4 Q19,-2 25,1 Q30,3 31,9 Q37,12 35,18 Q38,23 34.5,26 Z" fill="#f7cfc7" stroke="#e0524a" stroke-width="1.6"/><path d="M9,18 Q15,15 20,19 M14,12 Q20,10 25,13" stroke="#e0524a" stroke-width="1" fill="none"/><circle cx="26" cy="5" r="4.2" fill="#e0524a"/><path d="M27.5,1.5 Q28.5,-2 31.5,-2.5" stroke="#555" stroke-width="1.2" fill="none"/><path d="M4.5,26 H35.5 L33.5,35 Q33,37 31,37 H9 Q7,37 6.5,35 Z" fill="#28a6d8" stroke="#1f3550" stroke-width="2" stroke-linejoin="round"/></svg>
<div style="position:absolute;left:1940.75px;top:1596.25px;width:81.50px;height:81.50px;background:#fff;border-radius:50%;box-shadow:0 0 0 2.8px #d1d4dd inset;"></div>
<svg style="position:absolute;left:1961.50px;top:1617.00px;overflow:visible;" width="40" height="40" viewBox="0 0 40 40"><path d="M5,-1 V10 Q5,15.5 9.8,17 V36.5 Q9.8,39 12.8,39 Q15.8,39 15.8,36.5 V17 Q20.5,15.5 20.5,10 V-1" fill="#b0b5bd" stroke="#4b5058" stroke-width="2" stroke-linejoin="round"/><path d="M10.2,-1 V9 M15.3,-1 V9" stroke="#4b5058" stroke-width="2" stroke-linecap="round"/><path d="M25.5,-1.5 Q36.5,2 36.5,14 Q36.5,20 33,21 V36.5 Q33,39 30,39 Q27,39 27,36.5 V21 H25.5 Z" fill="#b0b5bd" stroke="#4b5058" stroke-width="2" stroke-linejoin="round"/></svg>
<div class="t" style="left:2388.00px;top:1620.50px;font-size:33.36px;letter-spacing:1.375px;color:#6b7280;">75 g</div>
<div style="position:absolute;left:2640.00px;top:1612.00px;width:178.65px;height:50.50px;background:#efefef;border-radius:25px;"></div>
<div class="t" style="left:2659.00px;top:1622.62px;font-size:27.91px;letter-spacing:0.750px;color:#2d3748;">6 alergenů</div>
<div style="position:absolute;left:2983.00px;top:1612.00px;width:102.00px;height:50.50px;background:#fdf3ee;border-radius:25px;"></div>
<div style="position:absolute;left:2999.00px;top:1630.00px;width:14.00px;height:14.00px;background:#e24a4a;border-radius:50%;"></div>
<div class="t" style="left:3029.70px;top:1622.62px;font-size:27.91px;letter-spacing:0.500px;color:#b9471c;">Ne</div>
<div class="t" style="left:3233.00px;top:1620.50px;font-size:33.36px;letter-spacing:1.125px;font-weight:700;color:#0d1424;">125,-</div>
<div style="position:absolute;left:3504.75px;top:1617.65px;width:7.00px;height:7.20px;background:#6b7280;border-radius:50%;"></div>
<div style="position:absolute;left:3504.75px;top:1633.40px;width:7.00px;height:7.20px;background:#6b7280;border-radius:50%;"></div>
<div style="position:absolute;left:3504.75px;top:1649.40px;width:7.00px;height:7.20px;background:#6b7280;border-radius:50%;"></div>
<div style="position:absolute;left:3641.00px;top:1614.25px;width:46.00px;height:45.75px;background:#fff;border-radius:12px;box-shadow:0 0 0 2.5px #d1d5db inset;"></div>
<div style="position:absolute;left:739.50px;top:1719.50px;width:3001.00px;height:162.00px;background:#f8f9f9;"></div>
<div style="position:absolute;left:739.50px;top:1717.00px;width:3001.00px;height:2.50px;background:#d3d6de;"></div>
<div style="position:absolute;left:790.75px;top:1760.50px;width:82.25px;height:82.00px;background:#fce6de;border-radius:50%;"></div>
<div class="t" style="left:812.40px;top:1786.41px;font-size:32.00px;letter-spacing:2.500px;font-weight:700;color:#dc3d3b;">12</div>
<div class="t" style="left:902.00px;top:1761.75px;font-size:33.36px;letter-spacing:0.570px;font-weight:700;color:#0d1424;">Vepřové výpečky se zelím a bramborovým knedlíkem</div>
<div class="t" style="left:900.00px;top:1809.97px;font-size:30.45px;letter-spacing:0.205px;color:#6b7280;">Hlavní jídlo</div>
<div style="position:absolute;left:1849.25px;top:1760.75px;width:81.50px;height:81.50px;background:#fff;border-radius:50%;box-shadow:0 0 0 2.8px #d1d4dd inset;"></div>
<svg style="position:absolute;left:1870.00px;top:1781.50px;overflow:visible;" width="40" height="40" viewBox="0 0 40 40"><path d="M17,-1 Q22,-1 27,5 Q38,15 37,26 Q35,37 24,37.5 Q18,38 13,34 L2,27 Q0,25 2.5,24 L8,19 Q10,18 11,20 L14,24 Q18,27 22,26 Q26,24 24,18 Q22,13 17,10 Q13,7 13.5,2 Q14,-1 17,-1 Z" fill="#f6b2a2" stroke="#e0524a" stroke-width="2" stroke-linejoin="round"/><path d="M22,12 L29,9 M24,19 L34,17 M23,26 L33,30 M14,24 L13,34" stroke="#e0524a" stroke-width="1.6"/></svg>
<div style="position:absolute;left:1940.75px;top:1760.75px;width:81.50px;height:81.50px;background:#fff;border-radius:50%;box-shadow:0 0 0 2.8px #d1d4dd inset;"></div>
<svg style="position:absolute;left:1961.50px;top:1781.50px;overflow:visible;" width="40" height="40" viewBox="0 0 40 40"><path d="M2.5,36.6 L9,1 Q10,-1 12,-0.5 Q30,3 40,25 Q41.5,29 38,29 Z" fill="#e49a2e" stroke="#b5501a" stroke-width="1.8" stroke-linejoin="round"/><path d="M2.5,36.6 L10,5 Q28,9 36,28.5 Z" fill="#f0b23a" stroke="#b5501a" stroke-width="1.5" stroke-linejoin="round"/><circle cx="11.7" cy="15.3" r="4.3" fill="#e0524a"/><circle cx="24.5" cy="23.1" r="5.2" fill="#e0524a"/><circle cx="11.5" cy="31.2" r="2.8" fill="#e0524a"/></svg>
<div style="position:absolute;left:2032.25px;top:1760.75px;width:81.50px;height:81.50px;background:#fff;border-radius:50%;box-shadow:0 0 0 2.8px #d1d4dd inset;"></div>
<svg style="position:absolute;left:2053.00px;top:1781.50px;overflow:visible;" width="40" height="40" viewBox="0 0 40 40"><path d="M4,10 Q6,4 16,3.5 Q32,3 38,10 Q42,14 41,21 Q40,26 33,25.5 Q30,29 25,27.5 Q20,29 17,25.5 L15,24.5 Q8,23 5,18 Q3,14 4,10 Z" fill="#a63e22" stroke="#1f2328" stroke-width="2" stroke-linejoin="round"/><path d="M4,10 L5,18 Q8,23 15,24.5 L16,18 Q9,16 4,10 Z" fill="#e0524a" stroke="#1f2328" stroke-width="1.5"/><path d="M3,22 Q1,30 5,35 Q10,40 14,37 Q9,31 8,24 Z" fill="#e0524a" stroke="#1f2328" stroke-width="1.8" stroke-linejoin="round"/></svg>
<div style="position:absolute;left:2123.75px;top:1760.75px;width:81.50px;height:81.50px;background:#fff;border-radius:50%;box-shadow:0 0 0 2.8px #d1d4dd inset;"></div>
<svg style="position:absolute;left:2144.50px;top:1781.50px;overflow:visible;" width="40" height="40" viewBox="0 0 40 40"><path d="M0.6,14 Q-0.5,6 5,5.5 Q8,0 13,2.5 Q17,-1.5 22,2.5 Q27,-0.5 31,3.5 Q37,3 38,8 Q41,10 39.6,14 Z" fill="#33b56a" stroke="#1f7a44" stroke-width="1.2"/><circle cx="11.3" cy="9.5" r="5" fill="#a63e22"/><circle cx="29.7" cy="10.5" r="5" fill="#a63e22"/><path d="M17,9 Q20,5 24,9 Q22,13 18,12 Z" fill="#33b56a"/><path d="M0.6,14 H39.6 Q39.6,38.5 20.1,38.5 Q0.6,38.5 0.6,14 Z" fill="#f0a58a" stroke="#b5501a" stroke-width="1.8"/></svg>
<div class="t" style="left:2389.00px;top:1785.00px;font-size:33.36px;letter-spacing:1.375px;color:#6b7280;">380 g</div>
<div style="position:absolute;left:2640.00px;top:1776.50px;width:194.92px;height:50.50px;background:#eceef2;border-radius:25px;"></div>
<div class="t" style="left:2658.00px;top:1787.12px;font-size:27.91px;letter-spacing:0.750px;color:#2d3748;">10 alergenů</div>
<div style="position:absolute;left:2983.00px;top:1776.50px;width:115.75px;height:50.50px;background:#d3f3df;border-radius:25px;"></div>
<div style="position:absolute;left:2999.00px;top:1794.50px;width:14.00px;height:14.00px;background:#22b45e;border-radius:50%;"></div>
<div class="t" style="left:3030.00px;top:1787.12px;font-size:27.91px;letter-spacing:0.500px;color:#139444;">Ano</div>
<div class="t" style="left:3233.00px;top:1785.00px;font-size:33.36px;letter-spacing:1.125px;font-weight:700;color:#0d1424;">156,-</div>
<div style="position:absolute;left:3504.75px;top:1782.15px;width:7.00px;height:7.20px;background:#6b7280;border-radius:50%;"></div>
<div style="position:absolute;left:3504.75px;top:1797.90px;width:7.00px;height:7.20px;background:#6b7280;border-radius:50%;"></div>
<div style="position:absolute;left:3504.75px;top:1813.90px;width:7.00px;height:7.20px;background:#6b7280;border-radius:50%;"></div>
<div style="position:absolute;left:3641.00px;top:1778.75px;width:46.00px;height:45.75px;background:#fff;border-radius:12px;box-shadow:0 0 0 2.5px #d1d5db inset;"></div>
<div style="position:absolute;left:739.50px;top:1884.00px;width:3001.00px;height:162.00px;background:#edfcf4;"></div>
<div style="position:absolute;left:739.50px;top:1884.00px;width:1267.50px;height:123.00px;background:#fff;"></div>
<div style="position:absolute;left:2007.00px;top:1884.00px;width:808.00px;height:105.00px;background:#fff;"></div>
<div style="position:absolute;left:2815.00px;top:1884.00px;width:168.00px;height:69.00px;background:#fff;"></div>
<div style="position:absolute;left:2983.00px;top:1884.00px;width:102.00px;height:105.00px;background:#fff;"></div>
<div style="position:absolute;left:3085.00px;top:1884.00px;width:655.50px;height:109.50px;background:#fff;"></div>
<div style="position:absolute;left:739.50px;top:1881.50px;width:3001.00px;height:2.50px;background:#d3d6de;"></div>
<div style="position:absolute;left:790.75px;top:1925.00px;width:82.25px;height:82.00px;background:#d2f6dc;border-radius:50%;"></div>
<div class="t" style="left:812.40px;top:1950.91px;font-size:32.00px;letter-spacing:2.500px;font-weight:700;color:#18904a;">16</div>
<div class="t" style="left:900.00px;top:1926.25px;font-size:33.36px;letter-spacing:0.570px;font-weight:700;color:#0d1424;">Panacotta s jahodovým přelivem</div>
<div class="t" style="left:900.00px;top:1974.47px;font-size:30.45px;letter-spacing:0.205px;color:#6b7280;">Dezert</div>
<div style="position:absolute;left:1849.25px;top:1925.25px;width:81.50px;height:81.50px;background:#fff;border-radius:50%;box-shadow:0 0 0 2.8px #d1d4dd inset;"></div>
<svg style="position:absolute;left:1870.00px;top:1946.00px;overflow:visible;" width="40" height="40" viewBox="0 0 40 40"><path d="M5,26 Q1,23 4,18 Q3,13 9,12 Q9,5 16,4 Q19,-2 25,1 Q30,3 31,9 Q37,12 35,18 Q38,23 34.5,26 Z" fill="#f7cfc7" stroke="#e0524a" stroke-width="1.6"/><path d="M9,18 Q15,15 20,19 M14,12 Q20,10 25,13" stroke="#e0524a" stroke-width="1" fill="none"/><circle cx="26" cy="5" r="4.2" fill="#e0524a"/><path d="M27.5,1.5 Q28.5,-2 31.5,-2.5" stroke="#555" stroke-width="1.2" fill="none"/><path d="M4.5,26 H35.5 L33.5,35 Q33,37 31,37 H9 Q7,37 6.5,35 Z" fill="#28a6d8" stroke="#1f3550" stroke-width="2" stroke-linejoin="round"/></svg>
<div style="position:absolute;left:1940.75px;top:1925.25px;width:81.50px;height:81.50px;background:#fff;border-radius:50%;box-shadow:0 0 0 2.8px #d1d4dd inset;"></div>
<svg style="position:absolute;left:1961.50px;top:1946.00px;overflow:visible;" width="40" height="40" viewBox="0 0 40 40"><path d="M5,-1 V10 Q5,15.5 9.8,17 V36.5 Q9.8,39 12.8,39 Q15.8,39 15.8,36.5 V17 Q20.5,15.5 20.5,10 V-1" fill="#b0b5bd" stroke="#4b5058" stroke-width="2" stroke-linejoin="round"/><path d="M10.2,-1 V9 M15.3,-1 V9" stroke="#4b5058" stroke-width="2" stroke-linecap="round"/><path d="M25.5,-1.5 Q36.5,2 36.5,14 Q36.5,20 33,21 V36.5 Q33,39 30,39 Q27,39 27,36.5 V21 H25.5 Z" fill="#b0b5bd" stroke="#4b5058" stroke-width="2" stroke-linejoin="round"/></svg>
<div class="t" style="left:2388.00px;top:1949.50px;font-size:33.36px;letter-spacing:1.375px;color:#6b7280;">75 g</div>
<div style="position:absolute;left:2640.00px;top:1941.00px;width:178.65px;height:50.50px;background:#efefef;border-radius:25px;"></div>
<div class="t" style="left:2659.00px;top:1951.62px;font-size:27.91px;letter-spacing:0.750px;color:#2d3748;">6 alergenů</div>
<div style="position:absolute;left:2983.00px;top:1941.00px;width:102.00px;height:50.50px;background:#fdf3ee;border-radius:25px;"></div>
<div style="position:absolute;left:2999.00px;top:1959.00px;width:14.00px;height:14.00px;background:#e24a4a;border-radius:50%;"></div>
<div class="t" style="left:3029.70px;top:1951.62px;font-size:27.91px;letter-spacing:0.500px;color:#b9471c;">Ne</div>
<div class="t" style="left:3233.00px;top:1949.50px;font-size:33.36px;letter-spacing:1.125px;font-weight:700;color:#0d1424;">125,-</div>
<div style="position:absolute;left:3504.75px;top:1946.65px;width:7.00px;height:7.20px;background:#6b7280;border-radius:50%;"></div>
<div style="position:absolute;left:3504.75px;top:1962.40px;width:7.00px;height:7.20px;background:#6b7280;border-radius:50%;"></div>
<div style="position:absolute;left:3504.75px;top:1978.40px;width:7.00px;height:7.20px;background:#6b7280;border-radius:50%;"></div>
<div style="position:absolute;left:3641.00px;top:1943.25px;width:46.00px;height:45.75px;background:#fff;border-radius:12px;box-shadow:0 0 0 2.5px #d1d5db inset;"></div>
<div style="position:absolute;left:739.50px;top:2048.50px;width:3001.00px;height:162.00px;background:#f8f9f9;"></div>
<div style="position:absolute;left:739.50px;top:2046.00px;width:3001.00px;height:2.50px;background:#d3d6de;"></div>
<div style="position:absolute;left:790.75px;top:2089.50px;width:82.25px;height:82.00px;background:#fce6de;border-radius:50%;"></div>
<div class="t" style="left:812.40px;top:2115.41px;font-size:32.00px;letter-spacing:2.500px;font-weight:700;color:#dc3d3b;">12</div>
<div class="t" style="left:902.00px;top:2090.75px;font-size:33.36px;letter-spacing:0.570px;font-weight:700;color:#0d1424;">Vepřové výpečky se zelím a bramborovým knedlíkem</div>
<div class="t" style="left:900.00px;top:2138.97px;font-size:30.45px;letter-spacing:0.205px;color:#6b7280;">Hlavní jídlo</div>
<div style="position:absolute;left:1849.25px;top:2089.75px;width:81.50px;height:81.50px;background:#fff;border-radius:50%;box-shadow:0 0 0 2.8px #d1d4dd inset;"></div>
<svg style="position:absolute;left:1870.00px;top:2110.50px;overflow:visible;" width="40" height="40" viewBox="0 0 40 40"><path d="M17,-1 Q22,-1 27,5 Q38,15 37,26 Q35,37 24,37.5 Q18,38 13,34 L2,27 Q0,25 2.5,24 L8,19 Q10,18 11,20 L14,24 Q18,27 22,26 Q26,24 24,18 Q22,13 17,10 Q13,7 13.5,2 Q14,-1 17,-1 Z" fill="#f6b2a2" stroke="#e0524a" stroke-width="2" stroke-linejoin="round"/><path d="M22,12 L29,9 M24,19 L34,17 M23,26 L33,30 M14,24 L13,34" stroke="#e0524a" stroke-width="1.6"/></svg>
<div style="position:absolute;left:1940.75px;top:2089.75px;width:81.50px;height:81.50px;background:#fff;border-radius:50%;box-shadow:0 0 0 2.8px #d1d4dd inset;"></div>
<svg style="position:absolute;left:1961.50px;top:2110.50px;overflow:visible;" width="40" height="40" viewBox="0 0 40 40"><path d="M2.5,36.6 L9,1 Q10,-1 12,-0.5 Q30,3 40,25 Q41.5,29 38,29 Z" fill="#e49a2e" stroke="#b5501a" stroke-width="1.8" stroke-linejoin="round"/><path d="M2.5,36.6 L10,5 Q28,9 36,28.5 Z" fill="#f0b23a" stroke="#b5501a" stroke-width="1.5" stroke-linejoin="round"/><circle cx="11.7" cy="15.3" r="4.3" fill="#e0524a"/><circle cx="24.5" cy="23.1" r="5.2" fill="#e0524a"/><circle cx="11.5" cy="31.2" r="2.8" fill="#e0524a"/></svg>
<div style="position:absolute;left:2032.25px;top:2089.75px;width:81.50px;height:81.50px;background:#fff;border-radius:50%;box-shadow:0 0 0 2.8px #d1d4dd inset;"></div>
<svg style="position:absolute;left:2053.00px;top:2110.50px;overflow:visible;" width="40" height="40" viewBox="0 0 40 40"><path d="M4,10 Q6,4 16,3.5 Q32,3 38,10 Q42,14 41,21 Q40,26 33,25.5 Q30,29 25,27.5 Q20,29 17,25.5 L15,24.5 Q8,23 5,18 Q3,14 4,10 Z" fill="#a63e22" stroke="#1f2328" stroke-width="2" stroke-linejoin="round"/><path d="M4,10 L5,18 Q8,23 15,24.5 L16,18 Q9,16 4,10 Z" fill="#e0524a" stroke="#1f2328" stroke-width="1.5"/><path d="M3,22 Q1,30 5,35 Q10,40 14,37 Q9,31 8,24 Z" fill="#e0524a" stroke="#1f2328" stroke-width="1.8" stroke-linejoin="round"/></svg>
<div style="position:absolute;left:2123.75px;top:2089.75px;width:81.50px;height:81.50px;background:#fff;border-radius:50%;box-shadow:0 0 0 2.8px #d1d4dd inset;"></div>
<svg style="position:absolute;left:2144.50px;top:2110.50px;overflow:visible;" width="40" height="40" viewBox="0 0 40 40"><path d="M0.6,14 Q-0.5,6 5,5.5 Q8,0 13,2.5 Q17,-1.5 22,2.5 Q27,-0.5 31,3.5 Q37,3 38,8 Q41,10 39.6,14 Z" fill="#33b56a" stroke="#1f7a44" stroke-width="1.2"/><circle cx="11.3" cy="9.5" r="5" fill="#a63e22"/><circle cx="29.7" cy="10.5" r="5" fill="#a63e22"/><path d="M17,9 Q20,5 24,9 Q22,13 18,12 Z" fill="#33b56a"/><path d="M0.6,14 H39.6 Q39.6,38.5 20.1,38.5 Q0.6,38.5 0.6,14 Z" fill="#f0a58a" stroke="#b5501a" stroke-width="1.8"/></svg>
<div class="t" style="left:2389.00px;top:2114.00px;font-size:33.36px;letter-spacing:1.375px;color:#6b7280;">380 g</div>
<div style="position:absolute;left:2640.00px;top:2105.50px;width:194.92px;height:50.50px;background:#eceef2;border-radius:25px;"></div>
<div class="t" style="left:2658.00px;top:2116.12px;font-size:27.91px;letter-spacing:0.750px;color:#2d3748;">10 alergenů</div>
<div style="position:absolute;left:2983.00px;top:2105.50px;width:115.75px;height:50.50px;background:#d3f3df;border-radius:25px;"></div>
<div style="position:absolute;left:2999.00px;top:2123.50px;width:14.00px;height:14.00px;background:#22b45e;border-radius:50%;"></div>
<div class="t" style="left:3030.00px;top:2116.12px;font-size:27.91px;letter-spacing:0.500px;color:#139444;">Ano</div>
<div class="t" style="left:3233.00px;top:2114.00px;font-size:33.36px;letter-spacing:1.125px;font-weight:700;color:#0d1424;">156,-</div>
<div style="position:absolute;left:3504.75px;top:2111.15px;width:7.00px;height:7.20px;background:#6b7280;border-radius:50%;"></div>
<div style="position:absolute;left:3504.75px;top:2126.90px;width:7.00px;height:7.20px;background:#6b7280;border-radius:50%;"></div>
<div style="position:absolute;left:3504.75px;top:2142.90px;width:7.00px;height:7.20px;background:#6b7280;border-radius:50%;"></div>
<div style="position:absolute;left:3641.00px;top:2107.75px;width:46.00px;height:45.75px;background:#fff;border-radius:12px;box-shadow:0 0 0 2.5px #d1d5db inset;"></div>
</body></html>
